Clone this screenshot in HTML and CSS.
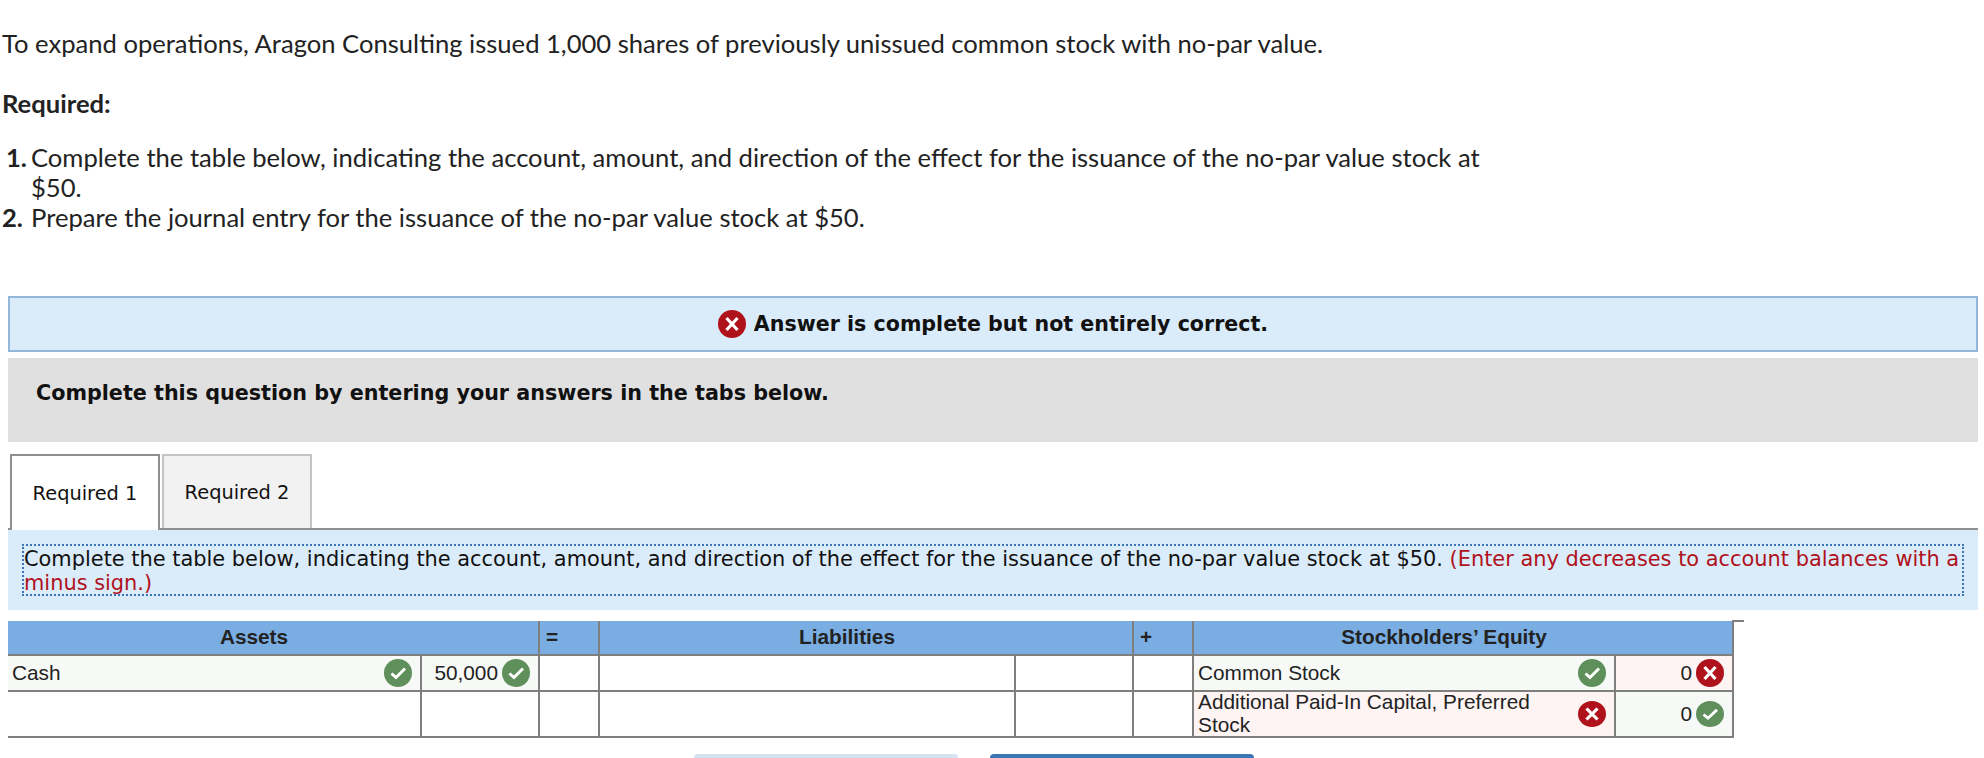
FILE: index.html
```html
<!DOCTYPE html>
<html lang="en">
<head>
  <meta charset="UTF-8">
  <meta name="viewport" content="width=device-width, initial-scale=1.0">
  <title>Aragon Consulting - Stock Issuance</title>
  <link rel="stylesheet" href="styles.css">
</head>
<body>
  <svg class="icon-defs" aria-hidden="true">
    <symbol id="icon-ok" viewBox="0 0 28 28" preserveAspectRatio="none">
      <circle cx="14" cy="14" r="14" fill="#5f8f5b"/>
      <path d="M7.5 14.5 L12 18.5 L21 9.5" fill="none" stroke="#fff" stroke-width="3"/>
    </symbol>
    <symbol id="icon-bad" viewBox="0 0 28 28" preserveAspectRatio="none">
      <circle cx="14" cy="14" r="14" fill="#b0121c"/>
      <path d="M8.5 8 L19.5 20 M19.5 8 L8.5 20" fill="none" stroke="#fff" stroke-width="3.2"/>
    </symbol>
  </svg>

  <section class="question">
    <p class="intro">To expand operations, Aragon Consulting issued 1,000 shares of previously unissued common stock with no-par value.</p>
    <p class="required">Required:</p>
    <ol class="steps">
      <li><b class="num one">1.</b><span>Complete the table below, indicating the account, amount, and direction of the effect for the issuance of the no-par value stock at $50.</span></li>
      <li><b class="num">2.</b><span>Prepare the journal entry for the issuance of the no-par value stock at $50.</span></li>
    </ol>
  </section>

  <main class="answer">
    <div class="banner">
      <svg class="icon"><use href="#icon-bad"/></svg>
      <strong>Answer is complete but not entirely correct.</strong>
    </div>
    <div class="prompt">Complete this question by entering your answers in the tabs below.</div>

    <div class="tabs">
      <button class="tab active">Required 1</button>
      <button class="tab">Required 2</button>
    </div>

    <div class="instructions">
      <p>Complete the table below, indicating the account, amount, and direction of the effect for the issuance of the no-par value stock at $50. <span class="red">(Enter any decreases to account balances with a</span> <span class="red">minus sign.)</span></p>
    </div>

    <table class="equation">
      <colgroup>
        <col class="c-account-a"><col class="c-amount"><col class="c-sign">
        <col class="c-account-l"><col class="c-amount"><col class="c-sign">
        <col class="c-account-e"><col class="c-amount"><col class="c-tick">
      </colgroup>
      <tr class="head">
        <th colspan="2" class="first">Assets</th>
        <th class="sign">=</th>
        <th colspan="2">Liabilities</th>
        <th class="sign">+</th>
        <th colspan="2">Stockholders’ Equity</th>
        <td class="tick" rowspan="3"></td>
      </tr>
      <tr class="row-one">
        <td class="ok first"><div class="cell"><span>Cash</span><svg class="icon"><use href="#icon-ok"/></svg></div></td>
        <td class="ok"><div class="cell amount"><span>50,000</span><svg class="icon"><use href="#icon-ok"/></svg></div></td>
        <td></td>
        <td></td>
        <td></td>
        <td></td>
        <td class="ok"><div class="cell"><span>Common Stock</span><svg class="icon"><use href="#icon-ok"/></svg></div></td>
        <td class="bad"><div class="cell amount"><span>0</span><svg class="icon"><use href="#icon-bad"/></svg></div></td>
      </tr>
      <tr class="row-two">
        <td class="first"></td>
        <td></td>
        <td></td>
        <td></td>
        <td></td>
        <td></td>
        <td class="bad"><div class="cell"><span>Additional Paid-In Capital, Preferred Stock</span><svg class="icon short"><use href="#icon-bad"/></svg></div></td>
        <td class="ok"><div class="cell amount"><span>0</span><svg class="icon short"><use href="#icon-ok"/></svg></div></td>
      </tr>
    </table>

    <div class="nav-buttons">
      <button class="nav prev"></button>
      <button class="nav next"></button>
    </div>
  </main>
</body>
</html>
```

FILE: styles.css
```css
* {
  margin: 0;
  padding: 0;
  box-sizing: border-box;
}

html, body {
  height: 758px;
  overflow: hidden;
}

body {
  background-color: #fff;
  color: #222;
  font-family: 'Lato', 'Open Sans', Arial, sans-serif;
}

.icon-defs {
  display: none;
}

/* Question text */
.question {
  padding: 28px 0 0 2px;
  font-size: 25.6px;
  line-height: 30px;
}

.required {
  margin-top: 30px;
  font-weight: 700;
}

.steps {
  list-style: none;
  margin-top: 24px;
  width: 1500px;
}

.steps li {
  display: grid;
  grid-template-columns: 29px 1fr;
}

.num {
  font-weight: 700;
}

.num.one {
  padding-left: 4px;
}

/* Answer area */
.answer {
  margin: 64px 6px 0 8px;
  font-family: 'DejaVu Sans', Verdana, sans-serif;
  color: #111;
}

.banner {
  display: flex;
  justify-content: center;
  align-items: center;
  gap: 8px;
  height: 56px;
  padding-bottom: 1px;
  background-color: #daebfa;
  border: 2px solid #92b7db;
  font-size: 20.6px;
}

.prompt {
  display: flex;
  align-items: center;
  height: 84px;
  margin-top: 6px;
  padding: 0 0 14px 28px;
  background-color: #e0e0e0;
  font-size: 20.7px;
  font-weight: 700;
}

/* Tabs */
.tabs {
  display: flex;
  gap: 2px;
  height: 76px;
  margin-top: 12px;
  padding-left: 2px;
  border-bottom: 2px solid #8f8f8f;
}

.tab {
  width: 150px;
  height: 74px;
  padding-top: 1px;
  background-color: #f2f2f2;
  border: 2px solid #c4c4c4;
  border-bottom: none;
  color: #111;
  font-family: inherit;
  font-size: 19.4px;
}

.tab.active {
  height: 76px;
  padding-top: 0;
  background-color: #fff;
  border-color: #8f8f8f;
}

.instructions {
  height: 80px;
  padding: 14px 14px 0;
  background-color: #daebfa;
}

.instructions p {
  height: 52px;
  padding-top: 1px;
  border: 2px dotted #3b75b8;
  font-size: 20.9px;
  line-height: 24px;
}

.red {
  color: #b0121c;
}

/* Accounting equation table */
.equation {
  width: 1736px;
  margin-top: 10px;
  table-layout: fixed;
  border-collapse: collapse;
  font-family: 'Liberation Sans', Arial, sans-serif;
  font-size: 20.8px;
  color: #222;
}

.c-account-a { width: 413px; }
.c-account-l { width: 416px; }
.c-account-e { width: 422px; }
.c-amount { width: 118px; }
.c-sign { width: 60px; }
.c-tick { width: 11px; }

.equation th,
.equation td {
  border: 2px solid #7f7f7f;
}

.equation .first {
  border-left: none;
}

.equation th {
  height: 34px;
  padding: 0 38px 2px 0;
  background-color: #7aaee2;
  border-top: none;
  font-size: 20.8px;
}

.equation th.sign {
  padding: 0 0 2px 6px;
  text-align: left;
}

.equation td.tick {
  border: none;
  border-left: 2px solid #7f7f7f;
  border-top: 2px solid #7f7f7f;
  background-color: #fff;
}

.row-one td {
  height: 36px;
}

.row-two td {
  height: 44px;
}

.row-two .cell {
  height: 44px;
}

td.ok {
  background-color: #f7f9f6;
}

td.bad {
  background-color: #fdf4f3;
}

.cell {
  display: flex;
  justify-content: space-between;
  align-items: center;
  gap: 20px;
  padding: 0 8px 0 4px;
  line-height: 23px;
}

.cell span {
  padding-bottom: 2px;
}

.cell.amount {
  justify-content: flex-end;
  gap: 4px;
}

.icon {
  flex: none;
  width: 28px;
  height: 28px;
}

.icon.short {
  height: 26px;
}

/* Bottom buttons, cut off by the window */
.nav-buttons {
  display: flex;
  gap: 32px;
  margin: 16px 0 0 686px;
}

.nav {
  width: 264px;
  height: 4px;
  border: none;
  border-radius: 4px 4px 0 0;
}

.nav.prev {
  background-color: #d5e3f0;
}

.nav.next {
  background-color: #3b75b5;
}
```
